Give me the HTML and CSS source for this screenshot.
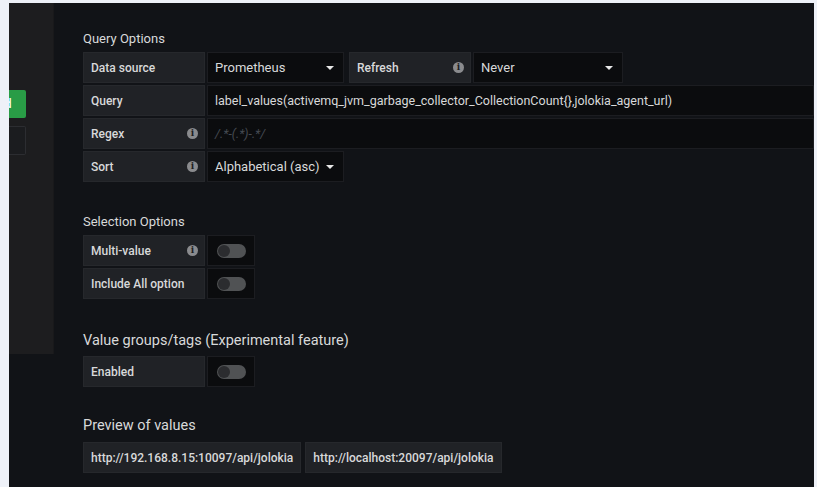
FILE: index.html
```html
<!DOCTYPE html>
<html>
<head>
<meta charset="utf-8">
<link rel="stylesheet" href="styles.css">
</head>
<body>
<div class="frame">
  <aside class="sidebar">
    <div class="btn-green"><span>Add</span></div>
    <div class="btn-gray"></div>
  </aside>
  <main class="main">
    <h5 class="section-title">Query Options</h5>
    <div class="rows">
      <div class="row">
        <label class="label">Data source</label>
        <div class="select w137"><span>Prometheus</span><i class="caret"></i></div>
        <label class="label ml5">Refresh<i class="info">i</i></label>
        <div class="select w150"><span>Never</span><i class="caret"></i></div>
      </div>
      <div class="row">
        <label class="label">Query</label>
        <div class="input grow">label_values(activemq_jvm_garbage_collector_CollectionCount{},jolokia_agent_url)</div>
      </div>
      <div class="row">
        <label class="label">Regex<i class="info">i</i></label>
        <div class="input grow placeholder">/.*-(.*)-.*/</div>
      </div>
      <div class="row">
        <label class="label">Sort<i class="info">i</i></label>
        <div class="select w137"><span>Alphabetical (asc)</span><i class="caret"></i></div>
      </div>
    </div>

    <h5 class="section-title sel">Selection Options</h5>
    <div class="rows">
      <div class="row">
        <label class="label">Multi-value<i class="info">i</i></label>
        <div class="switch"><span class="toggle"></span></div>
      </div>
      <div class="row">
        <label class="label">Include All option</label>
        <div class="switch"><span class="toggle"></span></div>
      </div>
    </div>

    <h5 class="section-title big">Value groups/tags (Experimental feature)</h5>
    <div class="rows">
      <div class="row">
        <label class="label">Enabled</label>
        <div class="switch"><span class="toggle"></span></div>
      </div>
    </div>

    <h5 class="section-title preview">Preview of values</h5>
    <div class="chips">
      <span class="chip">http://192.168.8.15:10097/api/jolokia</span>
      <span class="chip">http://localhost:20097/api/jolokia</span>
    </div>
  </main>
</div>
</body>
</html>
```

FILE: styles.css
```css
html, body {
  margin: 0;
  padding: 0;
  height: 100%;
  overflow: hidden;
}
body {
  background: #eef1f8;
  font-family: Roboto, "Liberation Sans", sans-serif;
  color: #d8d9da;
}
.frame {
  display: flex;
  margin: 3px 3px 0 9px;
  height: 484px;
  background: #111317;
  overflow: hidden;
}
.sidebar {
  width: 45px;
  height: 351px;
  flex: none;
  background: #1d1d1f;
  border-right: 1px solid #19191b;
  padding-top: 87px;
  box-sizing: border-box;
  display: flex;
  flex-direction: column;
  gap: 8px;
}
.btn-green {
  width: 17px;
  height: 28px;
  background: #299c46;
  border-radius: 0 2px 2px 0;
  overflow: hidden;
  display: flex;
  align-items: center;
  color: #fff;
  font-size: 12px;
  font-weight: 500;
}
.btn-green span {
  margin-left: -19px;
}
.btn-gray {
  width: 16px;
  height: 27px;
  background: #1b1c1f;
  border: 1px solid #2c2d31;
  border-left: none;
  border-radius: 0 2px 2px 0;
}
.main {
  flex: 1;
  padding: 28px 0 0 29px;
  min-width: 0;
}
.section-title {
  margin: 0 0 5px;
  font-size: 13px;
  line-height: 16px;
  font-weight: 400;
  color: #d8d9da;
}
.section-title.sel { margin-top: 32px; }
.section-title.big { margin-top: 33px; font-size: 14.5px; line-height: 18px; margin-bottom: 6px; }
.section-title.preview { margin-top: 30px; font-size: 14.5px; line-height: 17px; margin-bottom: 8px; }
.rows {
  display: flex;
  flex-direction: column;
  gap: 2px;
}
.row {
  display: flex;
  height: 31px;
  gap: 2px;
}
.label {
  width: 122px;
  box-sizing: border-box;
  flex: none;
  background: #202226;
  border: 1px solid #26282c;
  padding: 0 7px;
  display: flex;
  align-items: center;
  justify-content: space-between;
  font-size: 12px;
  font-weight: 500;
  color: #d8d9da;
}
.ml5 { margin-left: 3px; }
.info {
  width: 11px;
  height: 11px;
  border-radius: 50%;
  background: #8a8b8e;
  color: #1d1e21;
  font-style: normal;
  font-family: "DejaVu Serif", serif;
  font-weight: 700;
  font-size: 9px;
  line-height: 11px;
  text-align: center;
  margin-right: -1px;
}
.select, .input {
  box-sizing: border-box;
  background: #0b0c0e;
  border: 1px solid #1c1d21;
  display: flex;
  align-items: center;
  padding: 0 7px;
  font-size: 12.5px;
  color: #d8d9da;
  white-space: nowrap;
  overflow: hidden;
}
.select { justify-content: space-between; padding-right: 9px; font-size: 13px; }
.w137 { width: 137px; flex: none; }
.w150 { width: 150px; flex: none; }
.grow { flex: 1; min-width: 0; }
.placeholder {
  color: #454a52;
  font-style: italic;
}
.caret {
  width: 0;
  height: 0;
  border-left: 4px solid transparent;
  border-right: 4px solid transparent;
  border-top: 4px solid #e8e8e8;
}
.switch {
  width: 48px;
  flex: none;
  box-sizing: border-box;
  background: #0b0c0e;
  border: 1px solid #1c1d21;
  display: flex;
  align-items: center;
  padding-left: 9px;
}
.toggle {
  width: 29px;
  height: 14px;
  border-radius: 7px;
  background: #505254;
  position: relative;
}
.toggle::before {
  content: "";
  position: absolute;
  left: 1px;
  top: 1px;
  width: 12px;
  height: 12px;
  border-radius: 50%;
  background: #2b2c2f;
}
.chips {
  display: flex;
  gap: 4px;
}
.chip {
  height: 31px;
  box-sizing: border-box;
  background: #202226;
  border: 1px solid #26282c;
  padding: 0 7px;
  display: flex;
  align-items: center;
  font-size: 12px;
  font-weight: 500;
  color: #d8d9da;
}
```
